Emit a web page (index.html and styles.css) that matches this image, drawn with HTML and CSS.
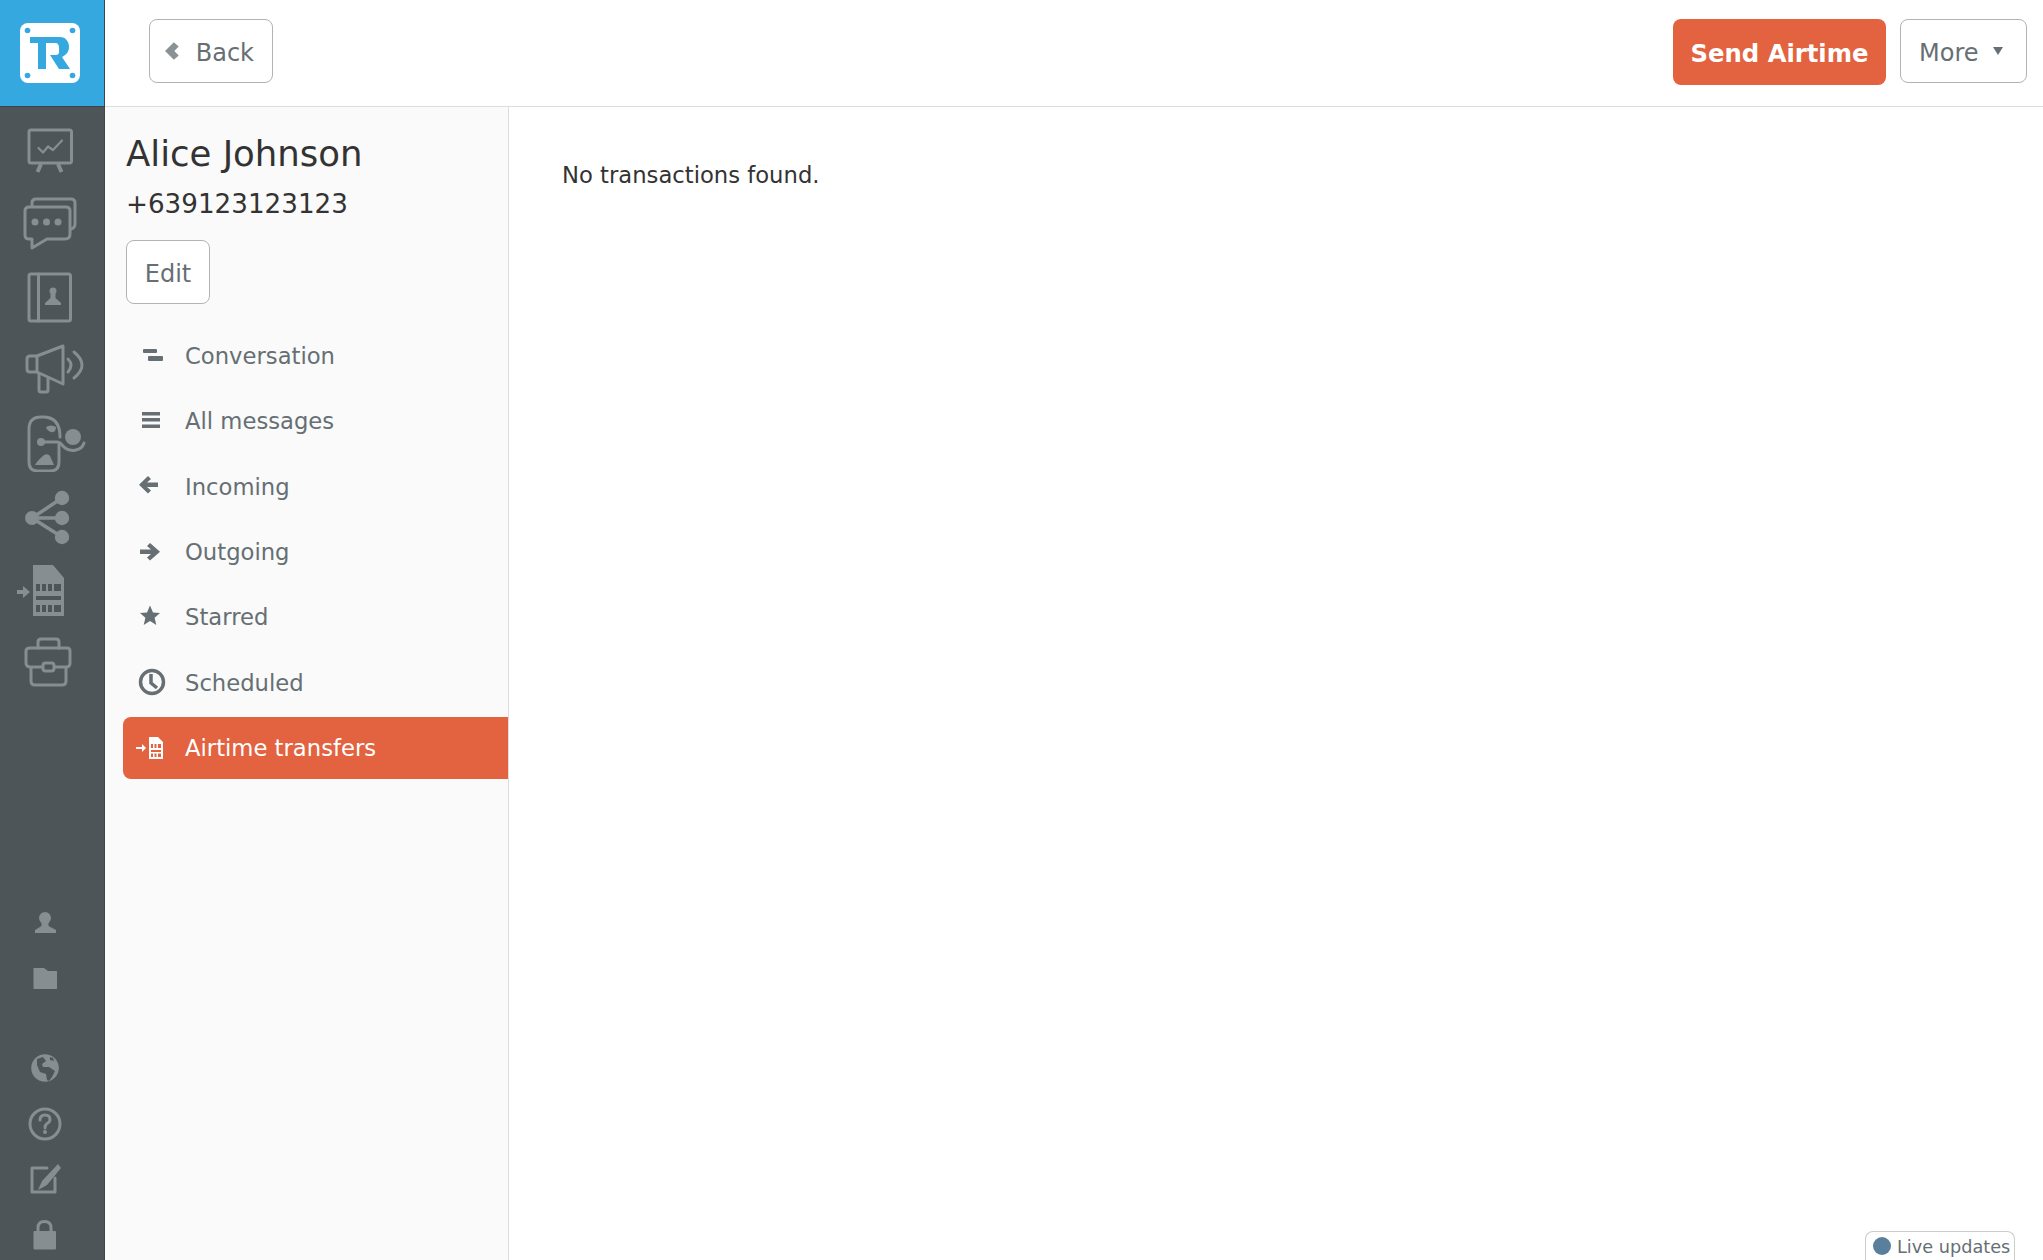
FILE: index.html
```html
<!DOCTYPE html>
<html lang="en">
  <head>
    <meta charset="UTF-8" />
    <meta name="viewport" content="width=device-width, initial-scale=1.0" />
    <title>Alice Johnson - Airtime transfers</title>
    <link rel="stylesheet" href="styles.css">
  </head>
  <body>
    <nav class="app-nav">
      <a class="brand">
        <svg class="brand-logo" viewBox="20 23 60 60">
          <rect x="20" y="23" width="60" height="60" rx="8" fill="#fff"/>
          <circle cx="27.500" cy="30.500" r="2.800"/><circle cx="72.500" cy="30.500" r="2.800"/>
          <circle cx="27.500" cy="75.500" r="2.800"/><circle cx="72.500" cy="75.500" r="2.800"/>
          <path d="M30 37H55V43H46V69H38V43H30Z"/>
          <path d="M55 37H60C66 37 69 42 69 47C69 52 66 55 62 57L70 69H59L50 55H56C60 55 59 51 59 48C59 45 58 43 55 43Z"/>
        </svg>
      </a>
      <div class="nav-main">
        <svg class="nav-icon" viewBox="12 120 74 60"><rect class="line" x="29" y="130" width="42.500" height="33" rx="2"/><path class="thin" d="M38.500 148L43 152.500L48 146.500L53 150L62 140.500"/><path class="legs" d="M41 164L37.500 172M58 164L61.500 172"/></svg>
        <svg class="nav-icon" viewBox="12 193 74 60"><path class="line" d="M32 205V203Q32 199 36 199H71Q75 199 75 203V224Q75 228 71 229"/><path class="line" d="M29 207H66Q70 207 70 211V234Q70 239 65 239H47L32 248V239H29Q25 239 25 235V211Q25 207 29 207Z"/><circle class="solid" cx="35" cy="222" r="3.500"/><circle class="solid" cx="46.500" cy="222" r="3.500"/><circle class="solid" cx="58" cy="222" r="3.500"/></svg>
        <svg class="nav-icon" viewBox="12 266 74 60"><rect class="line" x="29" y="274" width="41.500" height="47" rx="2"/><path class="line" d="M38.500 274V321"/><circle class="solid" cx="53" cy="291" r="3.500"/><path class="solid" d="M50.500 294H55.500L55.500 298L61 303V305H45V303L50.500 298Z"/></svg>
        <svg class="nav-icon" viewBox="12 339 74 60"><path class="line" d="M63 346V384L37 372H30Q27 372 27 369V359Q27 356 30 356H37Z"/><path class="line" d="M37 356V372M39 374V390Q39 392 41 392H46Q48 392 48 390V378"/><path class="line" d="M68 359Q74 365 68 372M74 352Q90 365 74 378"/></svg>
        <svg class="nav-icon" viewBox="12 412 74 60"><path class="line" d="M60 437Q60 417 43 417H41Q29 417 29 429V462Q29 471 38 471H50Q59 471 59 462V444"/><circle class="solid" cx="41" cy="442" r="4"/><path class="line" d="M41 442H57Q60 442 62 445Q68 452 76 450Q82 449 84 443"/><circle class="solid" cx="73" cy="437" r="8"/><path class="solid" d="M46 427Q51 424 56 427Q56 433 51 432Q47 431 46 427Z"/><path class="solid" d="M35 465Q37 461 44 455Q48 453 50 456L54 465Z"/></svg>
        <svg class="nav-icon" viewBox="12 485 74 60"><path class="share-line" d="M32 518L62 498M32 518H62M32 518L62 537"/><circle class="solid" cx="32" cy="518" r="7"/><circle class="solid" cx="62" cy="498" r="7.200"/><circle class="solid" cx="62" cy="518" r="7.200"/><circle class="solid" cx="62" cy="537" r="7.200"/></svg>
        <svg class="nav-icon" viewBox="12 558 74 60"><path class="solid" fill-rule="evenodd" d="M33 565H53L64 578V616H33ZM36 584V591H40V584ZM42 584V591H46V584ZM48 584V591H52V584ZM54 584V591H61V584ZM36 596V600H61V596ZM36 605V612H40V605ZM42 605V612H46V605ZM48 605V612H52V605ZM54 605V612H61V605Z"/><path class="solid" d="M17 590H23V586L30 592L23 598V594H17Z"/></svg>
        <svg class="nav-icon" viewBox="12 631 74 60"><path class="line" d="M38 648V642Q38 639 41 639H56Q59 639 59 642V648"/><path class="line" d="M30 648H67Q70 648 70 651V663Q70 667 66 667H31Q26 667 26 663V651Q26 648 30 648Z"/><path class="line" d="M31 668V681Q31 685 35 685H62Q66 685 66 681V668"/><rect class="line latch" x="43" y="663" width="11" height="8" rx="2.500"/></svg>
      </div>
      <div class="nav-tools">
        <div class="tool-group">
          <svg class="tool-icon" viewBox="25 902 40 40"><circle class="solid" cx="45" cy="918" r="6"/><path class="solid" d="M41.500 922H48.500V926L56 930V933H35V930L41.500 926Z"/></svg>
          <svg class="tool-icon" viewBox="25 957 40 40"><path class="solid" d="M33.500 967H44L48 970H57V988H33.500Z"/></svg>
        </div>
        <div class="tool-group">
          <svg class="tool-icon" viewBox="25 1047 40 40"><circle class="solid" cx="45" cy="1067" r="13.800"/><path class="cut" d="M37 1058L43 1056L46 1060L42 1063L43 1066L49 1066L55 1070L52 1076L49 1080L47 1079L46 1073L40 1071L37 1064ZM50 1056L53 1057L54 1060L50 1059Z"/></svg>
          <svg class="tool-icon" viewBox="25 1104 40 40"><circle class="line" cx="45" cy="1124" r="15"/><path class="line" d="M40 1120Q40 1115 45 1115Q50 1115 50 1119.500Q50 1122 47 1123.500Q45 1125 45 1128"/><circle class="solid" cx="45" cy="1132" r="2"/></svg>
          <svg class="tool-icon" viewBox="25 1160 40 40"><path class="line" d="M47 1168H32V1192H55V1178"/><path class="solid" d="M58 1164L61 1168L47 1185L38 1190L42 1181Z"/></svg>
          <svg class="tool-icon" viewBox="25 1216 40 40"><path class="line" d="M38 1232V1228Q38 1221.500 44.500 1221.500Q51 1221.500 51 1228V1232"/><rect class="solid" x="33.500" y="1231" width="22.500" height="18.500" rx="1"/></svg>
        </div>
      </div>
    </nav>

    <div class="page">
      <header class="topbar">
        <button class="btn btn-back">
          <svg class="chevron" viewBox="0 0 14 18"><path d="M9 0L14 4.500L9.500 9L14 13.500L9 18L0 9Z"/></svg>
          <span class="btn-text">Back</span>
        </button>
        <div class="topbar-actions">
          <button class="btn btn-primary"><span class="btn-text">Send Airtime</span></button>
          <button class="btn btn-more"><span class="btn-text">More</span> <span class="caret"></span></button>
        </div>
      </header>

      <div class="content">
        <aside class="sidebar">
          <h1 class="contact-name">Alice Johnson</h1>
          <div class="contact-phone">+639123123123</div>
          <button class="btn btn-edit">Edit</button>
          <ul class="menu">
            <li class="menu-item">
              <svg class="menu-icon" viewBox="134 338 36 36"><rect x="143" y="349" width="14" height="4" rx="1"/><rect x="148" y="356" width="15" height="5" rx="1"/></svg>
              Conversation
            </li>
            <li class="menu-item">
              <svg class="menu-icon" viewBox="134 403 36 36"><rect x="142" y="412" width="18" height="3.500"/><rect x="142" y="418" width="18" height="3.500"/><rect x="142" y="424.500" width="18" height="3.500"/></svg>
              All messages
            </li>
            <li class="menu-item">
              <svg class="menu-icon" viewBox="134 470 36 36"><path d="M148 477L151 480L147 483.500H158V488H147L151 491.500L148 494.500L139 485.700Z"/></svg>
              Incoming
            </li>
            <li class="menu-item">
              <svg class="menu-icon" viewBox="134 534 36 36"><path d="M150 543L147 546L151 549.500H140V554H151L147 557.500L150 560.500L160 551.700Z"/></svg>
              Outgoing
            </li>
            <li class="menu-item">
              <svg class="menu-icon" viewBox="134 599 36 36"><path d="M150 605.500L153 612.500L160 613L154.600 617.800L156.300 625L150 621L143.700 625L145.400 617.800L140 613L147 612.500Z"/></svg>
              Starred
            </li>
            <li class="menu-item">
              <svg class="menu-icon" viewBox="134 664 36 36"><circle class="ring" cx="152" cy="681" r="11.500"/><path class="ring" d="M151 673V682L157 687"/></svg>
              Scheduled
            </li>
            <li class="menu-item active">
              <svg class="menu-icon" viewBox="134 730 36 36"><path d="M136 747H142V744L146 748L142 752V749H136Z"/><path fill-rule="evenodd" d="M149 737H158L163 742V759H149ZM151 744V748H153V744ZM154.500 744V748H156.500V744ZM158 744V748H161V744ZM151 750V752H161V750ZM151 753.500V757H153V753.500ZM154.500 753.500V757H156.500V753.500ZM158 753.500V757H161V753.500Z"/></svg>
              Airtime transfers
            </li>
          </ul>
        </aside>
        <main class="main-panel">
          <p class="empty-note">No transactions found.</p>
        </main>
      </div>
    </div>

    <div class="live-updates"><span class="live-dot"></span><span class="live-text">Live updates</span></div>
  </body>
</html>
```
FILE: styles.css
```css
* {
  box-sizing: border-box;
}

html,
body {
  height: 100%;
}

body {
  font-family: "DejaVu Sans", Verdana, sans-serif;
  margin: 0;
  display: flex;
  height: 1260px;
  overflow: hidden;
  background-color: #fff;
  color: #333;
}

/* left icon rail */
.app-nav {
  flex: 0 0 105px;
  display: flex;
  flex-direction: column;
  background-color: #4d5559;
  border-right: 1px solid #3e4548;
}

.brand {
  height: 107px;
  flex: none;
  display: flex;
  padding: 23px 0 0 20px;
  background-color: #36a8e0;
  border-bottom: 1px solid #3e4548;
}

.brand-logo {
  width: 60px;
  height: 60px;
  fill: #36a8e0;
}

.nav-main {
  display: flex;
  flex-direction: column;
  gap: 13px;
  padding: 13px 0 0 12px;
}

.nav-icon {
  width: 74px;
  height: 60px;
  flex: none;
}

.nav-tools {
  margin-top: auto;
  padding: 0 0 4px 25px;
  display: flex;
  flex-direction: column;
  gap: 50px;
}

.tool-group {
  display: flex;
  flex-direction: column;
  gap: 16px;
}

.tool-icon {
  width: 40px;
  height: 40px;
  flex: none;
}

.line,
.thin,
.legs,
.share-line {
  fill: none;
  stroke: #868e91;
  stroke-width: 3;
  stroke-linejoin: round;
  stroke-linecap: round;
}

.latch {
  fill: #4d5559;
}

.thin {
  stroke-width: 2.200;
}

.legs {
  stroke-width: 4;
  stroke-linecap: butt;
}

.share-line {
  stroke-width: 3.500;
}

.solid {
  fill: #868e91;
}

.cut {
  fill: #4d5559;
}

/* top bar */
.page {
  flex: 1;
  display: flex;
  flex-direction: column;
  min-width: 0;
}

.topbar {
  height: 107px;
  flex: none;
  display: flex;
  justify-content: space-between;
  align-items: flex-start;
  padding: 19px 16px 0 44px;
  border-bottom: 1px solid #ddd;
}

.topbar-actions {
  display: flex;
  gap: 14px;
}

.btn {
  font-family: inherit;
  font-size: 24px;
  height: 64px;
  padding: 0 18px;
  color: #666f74;
  background-color: #fff;
  border: 1px solid #b3b3b3;
  border-radius: 8px;
  display: inline-flex;
  align-items: center;
  white-space: nowrap;
  cursor: pointer;
}

.btn-text {
  padding-top: 3px;
}

.btn-back {
  width: 124px;
  gap: 17px;
  padding-left: 15px;
}

.chevron {
  width: 14px;
  height: 18px;
  fill: #8a9296;
}

.btn-primary {
  width: 213px;
  height: 66px;
  padding: 0;
  justify-content: center;
  color: #fff;
  font-size: 24.300px;
  font-weight: bold;
  background-color: #e3623f;
  border: none;
}

.btn-more {
  width: 127px;
}

.caret {
  width: 0;
  height: 0;
  margin-left: 14px;
  border-left: 5px solid transparent;
  border-right: 5px solid transparent;
  border-top: 8px solid #666f74;
}

/* contact sidebar */
.content {
  flex: 1;
  display: flex;
  min-height: 0;
}

.sidebar {
  flex: 0 0 404px;
  padding: 0 0 0 21px;
  background-color: #fafafa;
  border-right: 1px solid #ddd;
}

.contact-name {
  font-size: 35.500px;
  font-weight: normal;
  line-height: 44px;
  margin: 25px 0 0;
  color: #333;
}

.contact-phone {
  font-size: 26.200px;
  line-height: 36px;
  margin-top: 10px;
  margin-bottom: 18px;
}

.btn-edit {
  width: 84px;
  justify-content: center;
  padding: 3px 0 0;
}

.menu {
  list-style: none;
  margin: 21px 0 0 -3px;
  padding: 0;
  display: flex;
  flex-direction: column;
  gap: 3.330px;
}

.menu-item {
  height: 62px;
  display: flex;
  align-items: center;
  gap: 15px;
  padding-left: 11px;
  font-size: 22.700px;
  color: #666f74;
  border-radius: 8px 0 0 8px;
}

.menu-icon {
  width: 36px;
  height: 36px;
  flex: none;
  fill: #666f74;
}

.ring {
  fill: none;
  stroke: #666f74;
  stroke-width: 3.500;
}

.menu-item.active {
  color: #fff;
  background-color: #e3623f;
}

.menu-item.active .menu-icon {
  fill: #fff;
}

/* main panel */
.main-panel {
  flex: 1;
  padding: 51px 53px;
}

.empty-note {
  margin: 0;
  font-size: 22.700px;
  line-height: 34px;
  color: #333;
}

.live-updates {
  position: absolute;
  right: 28px;
  bottom: 0;
  height: 29px;
  width: 150px;
  padding-left: 7px;
  display: flex;
  align-items: center;
  gap: 6px;
  font-size: 17.700px;
  color: #666f74;
  background-color: #fff;
  border: 1px solid #ccc;
  border-bottom: none;
  border-radius: 8px 8px 0 0;
}

.live-text {
  padding-top: 2px;
}

.live-dot {
  width: 18px;
  height: 18px;
  border-radius: 50%;
  background-color: #5a7f9d;
}
```
